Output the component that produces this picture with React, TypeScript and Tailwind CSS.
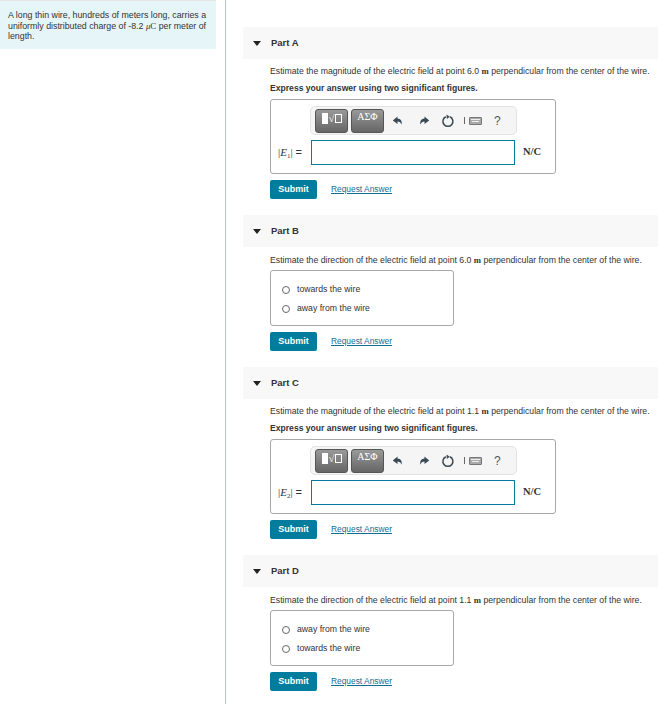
import type { ReactNode } from 'react'

const serif = { fontFamily: '"Liberation Serif", serif' }

function Toolbar() {
    return (
        <div className="ml-[39px] flex h-[29px] w-[207px] items-center rounded-[5px] border border-[#e3e3e3] bg-[#f5f5f5] pl-[4px]">
            <div className="relative flex h-[24px] w-[33px] items-start justify-center gap-[1px] rounded-[3px] border border-[#555] bg-gradient-to-b from-[#999] to-[#666] pl-[1px] pt-[3px]">
                <span className="h-[11px] w-[6px] bg-white" />
                <span className="text-[10px] leading-[11px] text-white" style={serif}>√</span>
                <span className="mt-[1px] h-[9px] w-[7px] border border-white" />
            </div>
            <div className="ml-[3px] flex h-[24px] w-[33px] justify-center rounded-[3px] border border-[#555] bg-gradient-to-b from-[#999] to-[#666] pt-[1px] text-[10px] leading-[12px] text-white" style={serif}>
                ΑΣΦ
            </div>
            <svg className="ml-[8px] h-[12px] w-[12px]" viewBox="0 0 12 12" fill="#3a4a55">
                <path d="M5.5 1.5 0.8 5.6 5.5 9V6.6c2 0 3.3.8 4.2 3.2.5-3.8-1-6-4.2-6.2z" />
            </svg>
            <svg className="ml-[14px] h-[12px] w-[12px]" viewBox="0 0 12 12" fill="#3a4a55">
                <path d="M6.5 1.5 11.2 5.6 6.5 9V6.6c-2 0-3.3.8-4.2 3.2-.5-3.8 1-6 4.2-6.2z" />
            </svg>
            <svg className="ml-[11px] h-[14px] w-[14px]" viewBox="0 0 14 14" fill="none" stroke="#3a4a55" strokeWidth="1.5">
                <path d="M9 2.8a5 5 0 1 1-4.2 0" />
                <path d="M5.5 .5 8.8 2.8 5.8 5" fill="#3a4a55" stroke="none" />
            </svg>
            <span className="ml-[9px] h-[7px] w-px bg-[#666]" />
            <div className="ml-[4px] flex h-[8px] w-[13px] flex-col items-center justify-center gap-[1px] rounded-[1px] border border-[#777] bg-[#aaa]">
                <span className="h-px w-[9px] bg-[#eee]" />
                <span className="h-px w-[7px] bg-[#eee]" />
            </div>
            <span className="ml-[12px] text-[12px] leading-none text-[#555]">?</span>
        </div>
    )
}

function Buttons() {
    return (
        <div className="flex items-center">
            <button className="h-[19px] w-[47px] rounded-[2px] bg-[#007c9d] text-[9px] font-bold text-white">Submit</button>
            <a className="ml-[14px] text-[8.4px] text-[#0f6f91] underline">Request Answer</a>
        </div>
    )
}

function PartHeader({ title }: { title: string }) {
    return (
        <div className="flex h-[32px] items-center bg-[#f8f8f8] pl-[10px] text-[9.5px] font-bold text-[#333]">
            <span className="h-0 w-0 border-x-[4px] border-t-[5px] border-x-transparent border-t-[#222]" />
            <span className="ml-[10px]">{title}</span>
        </div>
    )
}

function Unit() {
    return <span className="mt-[-2px] ml-[8px] text-[10.5px] font-bold text-[#333]" style={serif}>N/C</span>
}

function M({ children }: { children: ReactNode }) {
    return <span className="font-bold" style={serif}>{children}</span>
}

function Magnitude({ title, point, sub }: { title: string; point: string; sub: string }) {
    return (
        <div>
            <PartHeader title={title} />
            <div className="pl-[27px]">
                <p className="mt-[6px] whitespace-nowrap text-[8.7px] leading-[12px]">
                    Estimate the magnitude of the electric field at point {point} <M>m</M> perpendicular from the center of the wire.
                </p>
                <p className="mt-[5px] text-[8.6px] font-bold leading-[12px]">Express your answer using two significant figures.</p>
                <div className="mt-[5px] h-[75px] w-[286px] rounded-[3px] border border-[#a8a8a8] pt-[6px]">
                    <Toolbar />
                    <div className="mt-[5px] flex items-center">
                        <span className="ml-[7px] w-[33px] whitespace-nowrap text-[11px]" style={serif}>
                            |<i>E</i><sub className="text-[7px]">{sub}</sub>| <span style={{ fontFamily: '"Liberation Sans", sans-serif' }}>=</span>
                        </span>
                        <div className="h-[25px] w-[204px] border border-[#007c9d] bg-white" />
                        <Unit />
                    </div>
                </div>
                <div className="mt-[6px]">
                    <Buttons />
                </div>
            </div>
        </div>
    )
}

function Radio({ label }: { label: string }) {
    return (
        <div className="flex h-[19px] items-center">
            <span className="h-[8px] w-[8px] rounded-full border border-[#666] bg-white" />
            <span className="ml-[7px] text-[8.7px]">{label}</span>
        </div>
    )
}

function Direction({ title, point, options }: { title: string; point: string; options: string[] }) {
    return (
        <div>
            <PartHeader title={title} />
            <div className="pl-[27px]">
                <p className="mt-[7px] whitespace-nowrap text-[8.7px] leading-[12px]">
                    Estimate the direction of the electric field at point {point} <M>m</M> perpendicular from the center of the wire.
                </p>
                <div className="mt-[4px] flex h-[56px] w-[184px] flex-col justify-center rounded-[3px] border border-[#a8a8a8] pl-[11px] pt-[2px]">
                    {options.map((o) => (
                        <Radio key={o} label={o} />
                    ))}
                </div>
                <div className="mt-[6px]">
                    <Buttons />
                </div>
            </div>
        </div>
    )
}

export default function App() {
    return (
        <div className="flex h-[704px] w-[658px] overflow-hidden bg-white text-[#333]" style={{ fontFamily: '"Liberation Sans", Arial, sans-serif' }}>
            <div className="h-full w-[226px] shrink-0 border-r border-[#b9c4cc]">
                <div className="h-px w-[216px] bg-[#e5e5e5]" />
                <div className="h-[48px] w-[216px] bg-[#e6f5f7] pl-[8px] pr-[4px] pt-[9px] text-[8.8px] leading-[10.5px]">
                    A long thin wire, hundreds of meters long, carries a uniformly distributed charge of -8.2 <span style={serif}><i>μ</i>C</span> per meter of length.
                </div>
            </div>
            <div className="flex flex-1 flex-col gap-[16px] pl-[17px] pt-[27px]">
                <Magnitude title="Part A" point="6.0" sub="1" />
                <Direction title="Part B" point="6.0" options={['towards the wire', 'away from the wire']} />
                <Magnitude title="Part C" point="1.1" sub="2" />
                <Direction title="Part D" point="1.1" options={['away from the wire', 'towards the wire']} />
            </div>
        </div>
    )
}
